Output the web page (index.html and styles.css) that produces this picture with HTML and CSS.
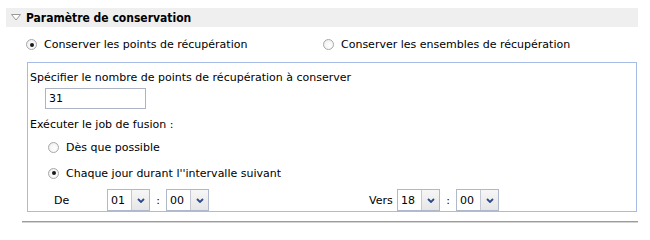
FILE: index.html
```html
<!DOCTYPE html>
<html lang="fr">
<head>
<meta charset="utf-8">
<link rel="stylesheet" href="styles.css">
</head>
<body>
<div class="section">
  <div class="section-head">
    <svg class="twisty" width="10" height="7" viewBox="0 0 10 7"><path d="M0.5 0.5 H9.5 L5 6 Z" fill="#fff" stroke="#9a9a9a" stroke-width="1"/></svg>
    <span class="section-title">Paramètre de conservation</span>
  </div>
  <div class="mode-row">
    <label class="opt opt-first"><span class="radio checked"></span>Conserver les points de récupération</label>
    <label class="opt"><span class="radio"></span>Conserver les ensembles de récupération</label>
  </div>
  <div class="panel">
    <div class="line l1">Spécifier le nombre de points de récupération à conserver</div>
    <div class="line l2"><span class="textbox">31</span></div>
    <div class="line l3">Exécuter le job de fusion :</div>
    <label class="line l4 sub"><span class="radio"></span>Dès que possible</label>
    <label class="line l5 sub"><span class="radio checked"></span>Chaque jour durant l''intervalle suivant</label>
    <div class="line l6 times">
      <div class="tgroup tg-from">
        <span class="tlabel tl-from">De</span>
        <span class="combo"><span class="cval">01</span><span class="cbtn"><svg width="8" height="5" viewBox="0 0 8 5"><path d="M1 1 L4 4 L7 1" fill="none" stroke="#2b4a8a" stroke-width="1.8"/></svg></span></span>
        <span class="colon">:</span>
        <span class="combo"><span class="cval">00</span><span class="cbtn"><svg width="8" height="5" viewBox="0 0 8 5"><path d="M1 1 L4 4 L7 1" fill="none" stroke="#2b4a8a" stroke-width="1.8"/></svg></span></span>
      </div>
      <div class="tgroup">
        <span class="tlabel tl-to">Vers</span>
        <span class="combo"><span class="cval">18</span><span class="cbtn"><svg width="8" height="5" viewBox="0 0 8 5"><path d="M1 1 L4 4 L7 1" fill="none" stroke="#2b4a8a" stroke-width="1.8"/></svg></span></span>
        <span class="colon">:</span>
        <span class="combo"><span class="cval">00</span><span class="cbtn"><svg width="8" height="5" viewBox="0 0 8 5"><path d="M1 1 L4 4 L7 1" fill="none" stroke="#2b4a8a" stroke-width="1.8"/></svg></span></span>
      </div>
    </div>
  </div>
  <div class="rule"></div>
</div>
</body>
</html>
```
FILE: styles.css
```css
html, body {
  margin: 0;
  padding: 0;
  background: #fff;
}
body {
  font-family: "DejaVu Sans", sans-serif;
  font-size: 11px;
  color: #000;
}
.section {
  width: 650px;
}
.section-head {
  margin: 8px 0 0 6px;
  width: 632px;
  height: 19px;
  background: #efefef;
  display: flex;
  align-items: center;
}
.twisty {
  margin-left: 5px;
  margin-right: 5px;
  display: block;
}
.section-title {
  font-family: "DejaVu Sans Condensed", "DejaVu Sans", sans-serif;
  font-weight: bold;
  font-size: 12px;
}
.mode-row {
  display: flex;
  align-items: center;
  height: 35px;
  padding-left: 26px;
}
.opt {
  display: flex;
  align-items: center;
}
.opt-first {
  width: 297px;
}
.radio {
  width: 9px;
  height: 9px;
  border: 1px solid #a8a8a8;
  border-radius: 50%;
  background: radial-gradient(circle at 60% 60%, #fff 0, #f4f4f4 60%, #dcdcdc 100%);
  margin-right: 7px;
  position: relative;
  flex: none;
}
.radio.checked::after {
  content: "";
  position: absolute;
  left: 2.5px;
  top: 2.5px;
  width: 4px;
  height: 4px;
  border-radius: 50%;
  background: #1a1a1a;
}
.panel {
  margin-left: 27px;
  width: 606px;
  border: 1px solid #a6bce6;
  padding: 0 0 0 2px;
}
.line {
  display: flex;
  align-items: center;
}
.l1 { margin-top: 4px; height: 20px; }
.l2 { margin-top: 1px; height: 21px; padding-left: 15px; }
.l3 { margin-top: 5px; height: 20px; }
.l4 { margin-top: 3px; height: 20px; }
.l5 { margin-top: 6px; height: 20px; }
.l6 { margin-top: 6px; height: 22px; }
.sub { padding-left: 18px; }
.textbox {
  box-sizing: border-box;
  width: 101px;
  height: 21px;
  border: 1px solid #acb4c4;
  padding-left: 3px;
  display: flex;
  align-items: center;
}
.tgroup {
  display: flex;
  align-items: center;
}
.tg-from {
  width: 339px;
}
.tlabel { display: block; box-sizing: border-box; }
.tl-from { width: 77px; padding-left: 24px; }
.tl-to { width: 28px; }
.combo {
  box-sizing: border-box;
  width: 43px;
  height: 22px;
  border: 1px solid #b0b8cc;
  display: flex;
}
.cval {
  flex: 1;
  display: flex;
  align-items: center;
  padding-left: 3px;
}
.cbtn {
  width: 17px;
  border-left: 1px solid #c4c8d4;
  background: linear-gradient(#f6f6f6, #e6e6e6);
  display: flex;
  align-items: center;
  justify-content: center;
}
.cbtn svg { display: block; }
.colon {
  width: 16px;
  text-align: center;
}
.rule {
  margin: 9px 0 0 22px;
  width: 616px;
  height: 1px;
  border-top: 1px solid #9c9c9c;
  background: #d4d4d4;
}
```
